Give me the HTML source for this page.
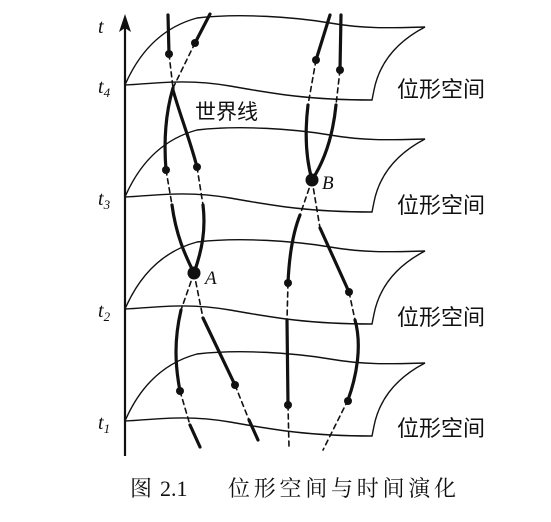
<!DOCTYPE html>
<html><head><meta charset="utf-8"><style>
html,body{margin:0;padding:0;background:#fff;}
svg{display:block;}
.cj{font-family:"Liberation Serif","Noto Serif CJK SC",serif;fill:#111;}
.cs{font-family:"Liberation Sans","Noto Sans CJK SC",sans-serif;fill:#111;}
.it{font-family:"Liberation Serif",serif;font-style:italic;fill:#111;}
</style></head><body>
<svg width="551" height="522" viewBox="0 0 551 522" xmlns="http://www.w3.org/2000/svg">
<defs>
<path id="sh" d="M125,85 C150,84 185,78 230,86 S310,100 372,100 L374,90 C380,60 400,40 425,27 C390,28 365,29 330,23 S240,13 197,18 C160,28 138,55 125,85" fill="none" stroke="#111" stroke-width="1.4"/>
</defs>
<use href="#sh"/>
<use href="#sh" transform="translate(0,112)"/>
<use href="#sh" transform="translate(0,224)"/>
<use href="#sh" transform="translate(0,336)"/>
<line x1="125" y1="456" x2="125" y2="26" stroke="#111" stroke-width="2.2"/>
<path d="M125,14 L119,32 L125,28 L131,32 Z" fill="#111"/>
<g class="it" font-size="20">
<text x="98" y="33">t</text>
<text x="98" y="93">t<tspan font-size="13" dy="4">4</tspan></text>
<text x="98" y="205">t<tspan font-size="13" dy="4">3</tspan></text>
<text x="98" y="317">t<tspan font-size="13" dy="4">2</tspan></text>
<text x="98" y="429">t<tspan font-size="13" dy="4">1</tspan></text>
</g>
<g fill="none" stroke="#111" stroke-linecap="round">
<g stroke-width="3.2">
<path d="M168,15 L169,54"/>
<path d="M210,14 L195,43"/>
<path d="M173,90 C180,115 190,140 197,167"/>
<path d="M173,88 C165,115 164,145 166,170"/>
<path d="M172,205 C176,235 185,255 194,273"/>
<path d="M203,205 C206,230 202,250 194,273"/>
<path d="M181,310 C174,340 175,365 180,391"/>
<path d="M203,318 L235,385"/>
<path d="M190,425 L200,447"/>
<path d="M249,420 L258,440"/>
<path d="M330,15 L316,60"/>
<path d="M341,15 L340,70"/>
<path d="M308,105 C305,130 305,155 312,180"/>
<path d="M336,105 C333,135 325,160 312,180"/>
<path d="M300,215 C292,235 289,260 288,283"/>
<path d="M320,228 L349,292"/>
<path d="M287,320 L288,405"/>
<path d="M355,320 C362,345 357,375 348,400"/>
</g>
<g stroke-width="1.6" stroke-dasharray="5,4">
<path d="M169,54 L173,88"/>
<path d="M195,43 L173,88"/>
<path d="M166,170 L172,205"/>
<path d="M197,167 L203,205"/>
<path d="M194,273 L181,310"/>
<path d="M194,273 L203,318"/>
<path d="M180,391 L190,425"/>
<path d="M235,385 L249,420"/>
<path d="M316,60 L308,105"/>
<path d="M340,70 L336,105"/>
<path d="M312,180 L300,215"/>
<path d="M312,180 L320,228"/>
<path d="M288,283 L287,320"/>
<path d="M349,292 L355,320"/>
<path d="M288,405 L289,447"/>
<path d="M348,400 L323,450"/>
</g>
</g>
<g fill="#111">
<circle cx="169" cy="54" r="4"/><circle cx="195" cy="43" r="4"/>
<circle cx="166" cy="170" r="4"/><circle cx="197" cy="167" r="4"/>
<circle cx="180" cy="391" r="4"/><circle cx="235" cy="385" r="4"/>
<circle cx="316" cy="60" r="4"/><circle cx="340" cy="70" r="4"/>
<circle cx="288" cy="283" r="4"/><circle cx="349" cy="292" r="4"/>
<circle cx="288" cy="405" r="4"/><circle cx="348" cy="401" r="4"/>
<circle cx="194" cy="273" r="6.5"/><circle cx="312" cy="180" r="6.5"/>
</g>
<text class="it" x="205" y="284" font-size="19">A</text>
<text class="it" x="322" y="189" font-size="19">B</text>
<text class="cs" x="195" y="119" font-size="21">世界线</text>
<g class="cs" font-size="22">
<text x="397" y="97">位形空间</text>
<text x="397" y="213">位形空间</text>
<text x="397" y="325">位形空间</text>
<text x="397" y="436">位形空间</text>
</g>
<text class="cj" x="130" y="496" font-size="22">图</text>
<text class="cj" x="160" y="496" font-size="22">2.1</text>
<text class="cj" x="228" y="496" font-size="22" textLength="228">位形空间与时间演化</text>
</svg>
</body></html>
